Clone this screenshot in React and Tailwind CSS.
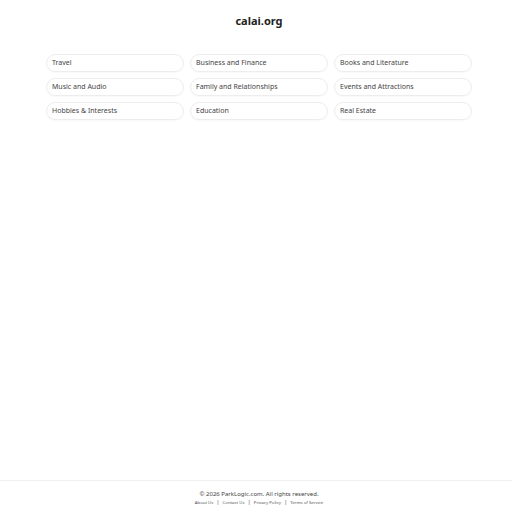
export default function App() {
  const items = [
    "Travel",
    "Business and Finance",
    "Books and Literature",
    "Music and Audio",
    "Family and Relationships",
    "Events and Attractions",
    "Hobbies & Interests",
    "Education",
    "Real Estate",
  ];
  return (
    <div className="min-h-[512px] flex flex-col bg-white text-[#333]" style={{ fontFamily: '"Noto Sans", "Open Sans", sans-serif' }}>
      <div className="flex-1 pl-[6px]">
        <h1 className="text-center text-[11px] font-bold text-[#222] pt-[13px] leading-[16px]">calai.org</h1>
        <div className="mx-auto mt-[25px] w-[426px] grid grid-cols-3 gap-[6px]">
          {items.map((t) => (
            <div
              key={t}
              className="h-[18px] flex items-center px-[5px] rounded-[9px] border border-[#ededed] shadow-[0_1px_2px_rgba(0,0,0,0.03)] text-[7px] text-[#444]"
            >
              {t}
            </div>
          ))}
        </div>
      </div>
      <footer className="border-t border-[#f0f0f0] pt-[8px] pb-[6px] pl-[6px] text-center">
        <div className="text-[6px] text-[#444] leading-[10px]">© 2026 ParkLogic.com. All rights reserved.</div>
        <div className="flex justify-center items-center gap-[3px] text-[4.3px] text-[#555] leading-[7px]">
          <span>About Us</span>
          <span className="text-[6px]">|</span>
          <span>Contact Us</span>
          <span className="text-[6px]">|</span>
          <span>Privacy Policy</span>
          <span className="text-[6px]">|</span>
          <span>Terms of Service</span>
        </div>
      </footer>
    </div>
  );
}
